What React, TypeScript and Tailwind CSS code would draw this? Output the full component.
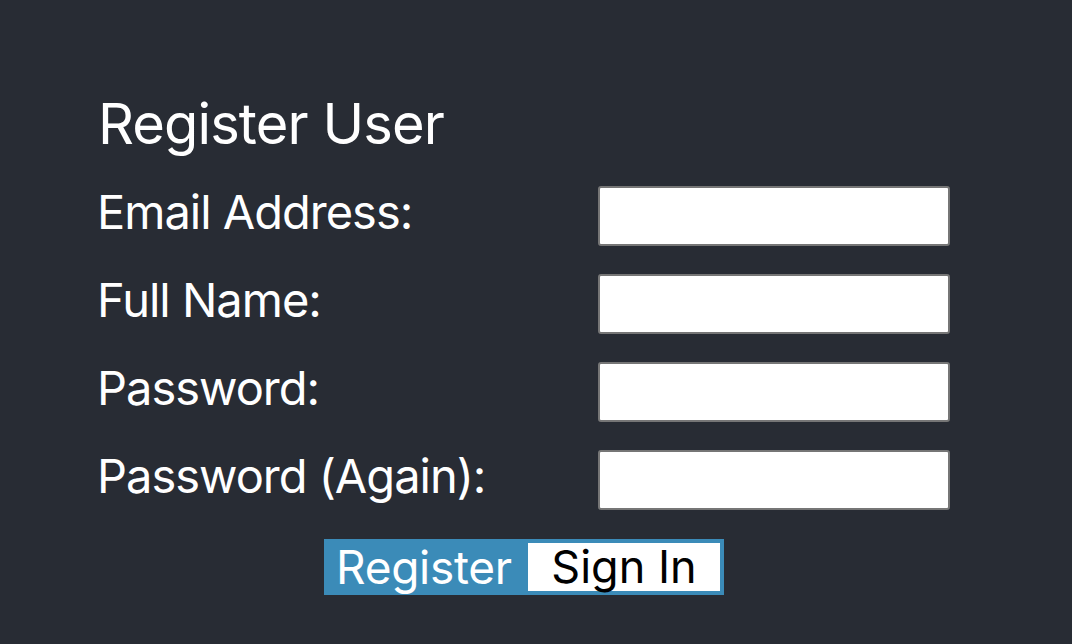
import * as React from "react";

const fields = ["Email Address:", "Full Name:", "Password:", "Password (Again):"];

export default function App() {
  return (
    <div
      className="w-[1072px] h-[644px] bg-[#282c34] text-white overflow-hidden"
      style={{ fontFamily: "Inter, 'Noto Sans', sans-serif" }}
    >
      <div className="pl-[98px] pt-[86px] w-[950px]">
        <h1 className="text-[56px] leading-[76px] font-normal tracking-[-0.9px]">Register User</h1>
        <div className="grid grid-cols-[500px_352px] gap-y-[28px] mt-[24px]">
          {fields.map((f) => (
            <React.Fragment key={f}>
              <label className="text-[47px] leading-[52px] tracking-[-1px] -ml-[1px]">{f}</label>
              <input
                type="text"
                className="h-[60px] w-[352px] bg-white border-2 border-[#767676] rounded-[3px] outline-none"
              />
            </React.Fragment>
          ))}
        </div>
        <div className="flex justify-center mt-[29px] w-[852px]">
          <div className="flex bg-[#3b8bb8] p-[4px]">
            <button className="w-[200px] text-left pl-[8px] text-[46px] leading-[48px] text-white tracking-[-0.3px]">
              Register
            </button>
            <button className="w-[192px] text-[45px] leading-[48px] text-black bg-white">Sign In</button>
          </div>
        </div>
      </div>
    </div>
  );
}
